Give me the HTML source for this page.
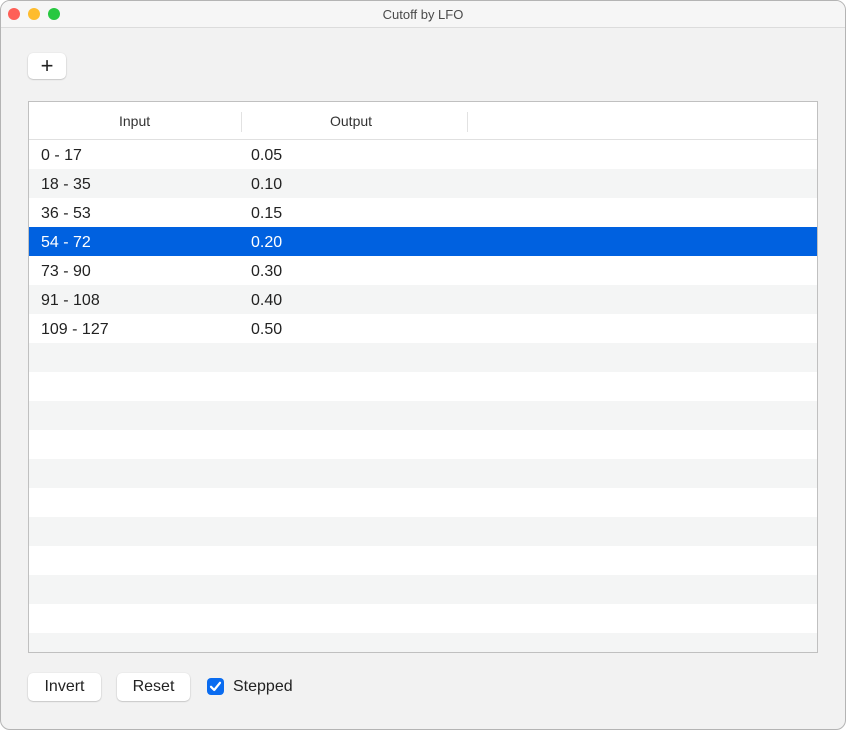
<!DOCTYPE html>
<html><head><style>
*{box-sizing:border-box;margin:0;padding:0}
body{width:846px;height:730px;background:#fff;font-family:"Liberation Sans",sans-serif;position:relative;overflow:hidden}
.win{position:absolute;left:0;top:0;width:846px;height:730px;border:1px solid #b4b4b4;border-radius:10px;background:#f2f2f2;overflow:hidden}
.title{height:27px;background:#f6f6f6;border-bottom:1px solid #dcdcdc;text-align:center;font-size:13px;line-height:27px;color:#4a4a4a}
.dot{position:absolute;top:8px;width:12px;height:12px;border-radius:50%}
.btn{position:absolute;background:#fff;border-radius:5px;box-shadow:0 0.5px 1.5px rgba(0,0,0,.3);font-size:16px;color:#222;text-align:center}
.table{position:absolute;left:27px;top:100px;width:790px;height:552px;border:1px solid #c0c0c0;background:#fff;overflow:hidden}
.hdr{height:38px;border-bottom:1px solid #e0e0e0;position:relative;font-size:14px;color:#333}
.hdr span{position:absolute;top:11px}
.sep{position:absolute;top:10px;width:1px;height:20px;background:#e2e2e2}
.row{height:29px;position:relative;font-size:16px;color:#222}
.row.g{background:#f4f5f5}
.row.s{background:#0061e0;color:#fff}
.row span{position:absolute;top:7px}
</style></head><body>
<div class="win">
<div class="title">Cutoff by LFO</div>
<div class="dot" style="left:7px;top:7px;background:#fe5f57"></div>
<div class="dot" style="left:27px;top:7px;background:#febc2e"></div>
<div class="dot" style="left:47px;top:7px;background:#28c840"></div>
<div class="btn" style="left:27px;top:52px;width:38px;height:26px;font-size:22px;line-height:25px;font-weight:300">+</div>
<div class="table">
<div class="hdr"><span style="left:90px">Input</span><div class="sep" style="left:212px"></div><span style="left:301px">Output</span><div class="sep" style="left:438px"></div></div>
<div class="row"><span style="left:12px">0 - 17</span><span style="left:222px">0.05</span></div>
<div class="row g"><span style="left:12px">18 - 35</span><span style="left:222px">0.10</span></div>
<div class="row"><span style="left:12px">36 - 53</span><span style="left:222px">0.15</span></div>
<div class="row s"><span style="left:12px">54 - 72</span><span style="left:222px">0.20</span></div>
<div class="row"><span style="left:12px">73 - 90</span><span style="left:222px">0.30</span></div>
<div class="row g"><span style="left:12px">91 - 108</span><span style="left:222px">0.40</span></div>
<div class="row"><span style="left:12px">109 - 127</span><span style="left:222px">0.50</span></div>
<div class="row g"></div><div class="row"></div><div class="row g"></div><div class="row"></div><div class="row g"></div><div class="row"></div><div class="row g"></div><div class="row"></div><div class="row g"></div><div class="row"></div><div class="row g"></div><div class="row"></div>
</div>
<div class="btn" style="left:27px;top:672px;width:73px;height:28px;line-height:28px">Invert</div>
<div class="btn" style="left:116px;top:672px;width:73px;height:28px;line-height:28px">Reset</div>
<div style="position:absolute;left:206px;top:677px;width:17px;height:17px;border-radius:4px;background:#0a6cf0">
<svg width="17" height="17" viewBox="0 0 17 17"><path d="M4 8.8 L7.2 12 L13 4.8" stroke="#fff" stroke-width="2.2" fill="none" stroke-linecap="round" stroke-linejoin="round"/></svg></div>
<div style="position:absolute;left:232px;top:677px;font-size:16px;color:#222">Stepped</div>
</div>
</body></html>
